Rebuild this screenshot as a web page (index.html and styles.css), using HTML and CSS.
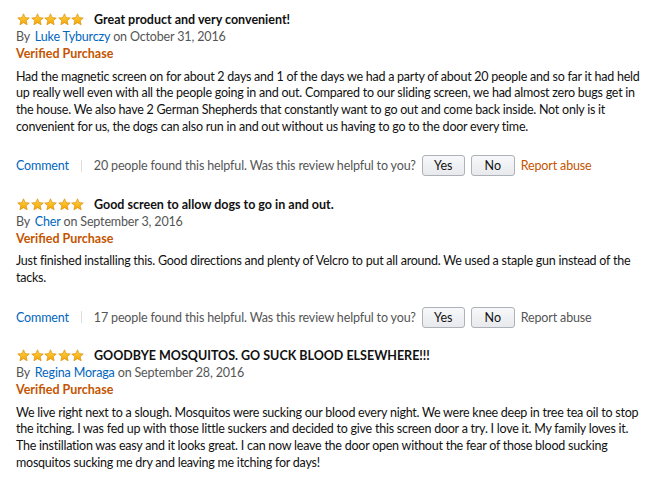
FILE: index.html
```html
<!DOCTYPE html>
<html>
<head>
<meta charset="utf-8">
<link rel="stylesheet" href="styles.css">
</head>
<body>
<svg width="0" height="0" class="defs">
  <defs>
    <linearGradient id="sg" x1="0" y1="0" x2="0" y2="1">
      <stop offset="0" stop-color="#ffd54a"/>
      <stop offset="1" stop-color="#f5a300"/>
    </linearGradient>
    <symbol id="star" viewBox="0 0 24 24">
      <path d="M12 1.5l3.1 7 7.6.7-5.8 5 1.8 7.5L12 17.8l-6.7 3.9 1.8-7.5-5.8-5 7.6-.7z" fill="url(#sg)" stroke="#d98a00" stroke-width="1.2" stroke-linejoin="round"/>
    </symbol>
  </defs>
</svg>
<div class="reviews">
  <div class="review">
    <div class="head">
      <span class="stars"><svg><use href="#star"/></svg><svg><use href="#star"/></svg><svg><use href="#star"/></svg><svg><use href="#star"/></svg><svg><use href="#star"/></svg></span>
      <span class="title">Great product and very convenient!</span>
    </div>
    <div class="by">By <a class="author">Luke Tyburczy</a> on October 31, 2016</div>
    <div class="verified">Verified Purchase</div>
    <p class="body">Had the magnetic screen on for about 2 days and 1 of the days we had a party of about 20 people and so far it had held up really well even with all the people going in and out. Compared to our sliding screen, we had almost zero bugs get in the house. We also have 2 German Shepherds that constantly want to go out and come back inside. Not only is it convenient for us, the dogs can also run in and out without us having to go to the door every time.</p>
    <div class="actions">
      <a class="comment">Comment</a>
      <span class="sep"></span>
      <span class="helpful">20 people found this helpful. Was this review helpful to you?</span>
      <button class="btn yes">Yes</button>
      <button class="btn no">No</button>
      <a class="report">Report abuse</a>
    </div>
  </div>
  <div class="review">
    <div class="head">
      <span class="stars"><svg><use href="#star"/></svg><svg><use href="#star"/></svg><svg><use href="#star"/></svg><svg><use href="#star"/></svg><svg><use href="#star"/></svg></span>
      <span class="title">Good screen to allow dogs to go in and out.</span>
    </div>
    <div class="by">By <a class="author">Cher</a> on September 3, 2016</div>
    <div class="verified">Verified Purchase</div>
    <p class="body">Just finished installing this. Good directions and plenty of Velcro to put all around. We used a staple gun instead of the tacks.</p>
    <div class="actions">
      <a class="comment">Comment</a>
      <span class="sep"></span>
      <span class="helpful">17 people found this helpful. Was this review helpful to you?</span>
      <button class="btn yes">Yes</button>
      <button class="btn no">No</button>
      <a class="report gray">Report abuse</a>
    </div>
  </div>
  <div class="review">
    <div class="head">
      <span class="stars"><svg><use href="#star"/></svg><svg><use href="#star"/></svg><svg><use href="#star"/></svg><svg><use href="#star"/></svg><svg><use href="#star"/></svg></span>
      <span class="title">GOODBYE MOSQUITOS. GO SUCK BLOOD ELSEWHERE!!!</span>
    </div>
    <div class="by">By <a class="author">Regina Moraga</a> on September 28, 2016</div>
    <div class="verified">Verified Purchase</div>
    <p class="body">We live right next to a slough. Mosquitos were sucking our blood every night. We were knee deep in tree tea oil to stop the itching. I was fed up with those little suckers and decided to give this screen door a try. I love it. My family loves it. The instillation was easy and it looks great. I can now leave the door open without the fear of those blood sucking mosquitos sucking me dry and leaving me itching for days!</p>
  </div>
</div>
</body>
</html>
```

FILE: styles.css
```css
html, body {
  margin: 0;
  padding: 0;
  background: #fff;
}
body {
  font-family: Lato, "Liberation Sans", sans-serif;
  font-size: 12.5px;
  letter-spacing: -0.15px;
  color: #111;
}
.defs {
  position: absolute;
  width: 0;
  height: 0;
}
.reviews {
  padding: 11px 14px 0 16px;
}
.review {
  margin-bottom: 19px;
}
.head {
  display: flex;
  align-items: center;
  height: 17px;
  line-height: 17px;
}
.stars {
  display: flex;
  gap: 0.5px;
  margin-right: 10px;
  margin-left: 1px;
}
.stars svg {
  width: 13px;
  height: 13px;
}
.title {
  font-weight: 700;
  letter-spacing: 0;
  color: #111;
}
.by {
  height: 17px;
  line-height: 17px;
  color: #555;
}
.author {
  color: #0066c0;
  margin-left: 2px;
}
.verified {
  height: 17px;
  line-height: 17px;
  color: #c45500;
  font-weight: 700;
  letter-spacing: 0;
}
.body {
  margin: 6.5px 0 0;
  line-height: 16.7px;
  letter-spacing: -0.24px;
  color: #111;
}
.actions {
  display: flex;
  align-items: center;
  height: 22px;
  margin-top: 19.5px;
}
.comment {
  color: #0066c0;
}
.sep {
  width: 1px;
  height: 12px;
  background: #ddd;
  margin: 0 12px;
}
.helpful {
  color: #555;
}
.btn {
  font-family: inherit;
  font-size: 12.5px;
  color: #111;
  height: 21px;
  margin-left: 6px;
  border: 1px solid #adb1b8;
  border-radius: 3px;
  background: linear-gradient(#f7f8fa, #e7e9ec);
  line-height: 19px;
  padding: 0;
}
.btn.yes {
  width: 43px;
}
.btn.no {
  width: 44px;
}
.report {
  color: #c45500;
  margin-left: 6px;
}
.report.gray {
  color: #555;
}
```
